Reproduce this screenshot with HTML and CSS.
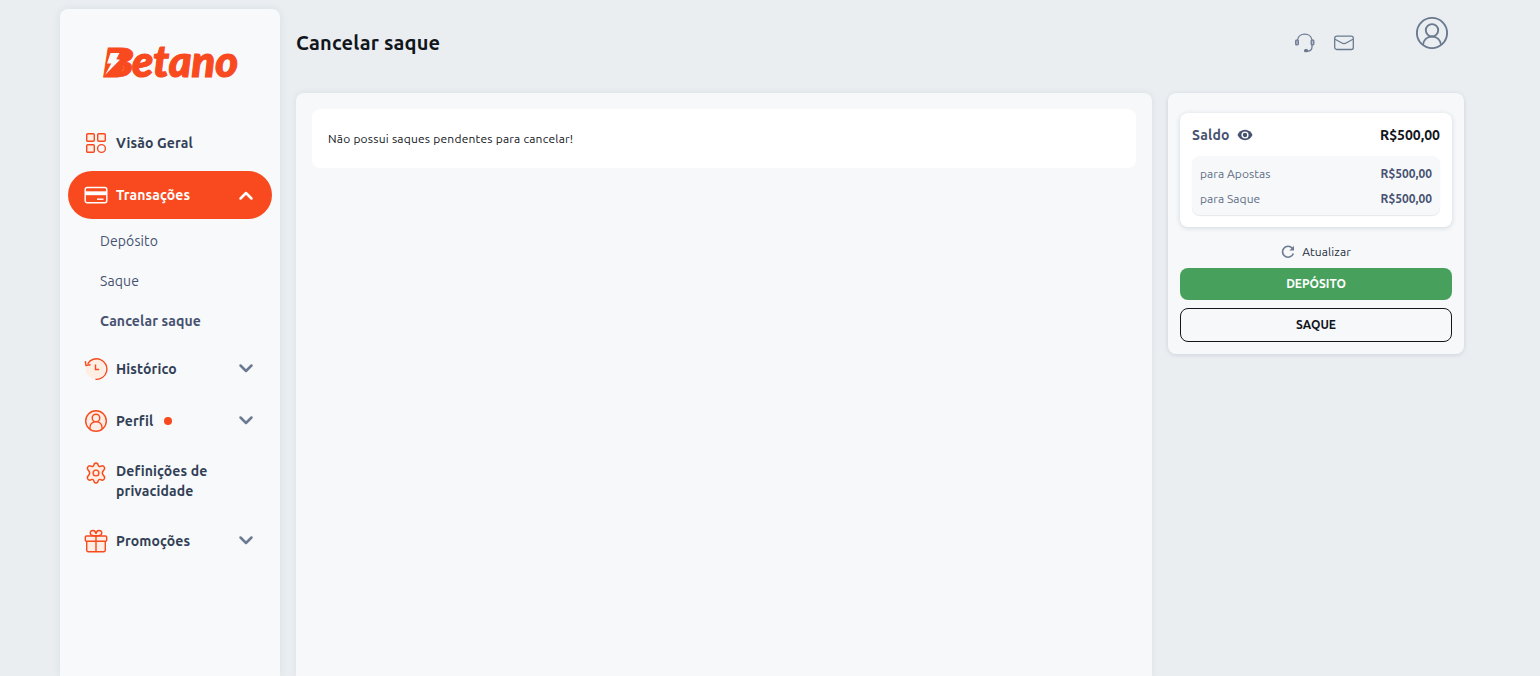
FILE: index.html
```html
<!DOCTYPE html>
<html lang="pt">
<head>
<meta charset="utf-8">
<title>Cancelar saque</title>
	<link rel="stylesheet" href="styles.css">
</head>
<body>
	<div class="page">
		<aside class="sidebar">
			<a class="logo" href="#">
				<svg width="180" height="90" viewBox="0 0 180 90">
					<text class="logo-b" x="22" y="57.500" textLength="32" lengthAdjust="spacingAndGlyphs">B</text>
					<text class="logo-text" x="52" y="57.500" textLength="106" lengthAdjust="spacingAndGlyphs">etano</text>
					<path d="M28 31h17l1 6-4 5 2 7-4 6H25z" fill="#f84a1e"/>
					<path d="M30.500 34h9l-3.200 6.200 3.700.6L25 56l6.300-11.500H27z" fill="#f7f9fb"/>
				</svg>
			</a>
			<nav class="menu">
				<a class="item" href="#">
					<svg class="icon" viewBox="0 0 24 24">
						<rect x="2.700" y="2.700" width="7.600" height="7.600" rx="1"/>
						<rect x="13.700" y="2.700" width="7.600" height="7.600" rx="1"/>
						<rect x="2.700" y="13.700" width="7.600" height="7.600" rx="1"/>
						<circle class="hollow" cx="17.500" cy="17.500" r="3.900"/>
					</svg>
					<span class="label">Visão Geral</span>
				</a>
				<a class="item active" href="#">
					<svg class="icon" viewBox="0 0 24 24">
						<rect x="1.200" y="4.500" width="21.600" height="15.300" rx="2"/>
						<path class="solid" d="M1 8.300h22v3.900H1z"/>
						<path d="M13 16.200h6.500"/>
					</svg>
					<span class="label">Transações</span>
					<svg class="chevron" viewBox="0 0 16 16"><path d="M2.500 11.500L8 6l5.500 5.500"/></svg>
				</a>
				<div class="submenu">
					<a href="#">Depósito</a>
					<a href="#">Saque</a>
					<a href="#" class="current">Cancelar saque</a>
				</div>
				<a class="item" href="#">
					<svg class="icon" viewBox="0 0 24 24">
						<circle class="tint" cx="11.500" cy="12" r="10"/>
						<path class="hollow" d="M3.700 6.800A10.300 10.300 0 1 1 11.500 22.300M1.300 4.200l.7 4.300 4.600-.8M11.500 7.500v5h3.700"/>
					</svg>
					<span class="label">Histórico</span>
					<svg class="chevron" viewBox="0 0 16 16"><path d="M2.500 4.500L8 10l5.500-5.500"/></svg>
				</a>
				<a class="item" href="#">
					<svg class="icon" viewBox="0 0 24 24">
						<circle cx="12" cy="12" r="10.300"/>
						<circle cx="12" cy="9" r="3.800"/>
						<path d="M6 20v-1.700c0-3.200 2.500-5.500 6-5.500s6 2.300 6 5.500V20"/>
					</svg>
					<span class="label">Perfil</span>
					<span class="dot"></span>
					<svg class="chevron" viewBox="0 0 16 16"><path d="M2.500 4.500L8 10l5.500-5.500"/></svg>
				</a>
				<a class="item wrap" href="#">
					<svg class="icon" viewBox="0 0 24 24">
						<path d="M9.900 4.200C10 2.700 10.800 2 12 2s2 .7 2.100 2.200c.2 1 1.500 1.600 2.500 1.100 1.500-.8 2.900-.5 3.700.8.700 1.300.3 2.500-.9 3.500-1.300 1.400-1.300 3.400 0 4.800 1.200 1 1.600 2.200.9 3.500-.8 1.300-2.200 1.600-3.700.8-1-.5-2.300.1-2.500 1.100C14 21.300 13.200 22 12 22s-2-.7-2.100-2.200c-.2-1-1.500-1.600-2.500-1.100-1.500.8-2.900.5-3.700-.8-.7-1.300-.3-2.500.9-3.500 1.300-1.400 1.300-3.400 0-4.800-1.200-1-1.600-2.200-.9-3.500.8-1.300 2.200-1.600 3.700-.8 1 .5 2.300-.1 2.500-1.100z"/>
						<circle class="hollow" cx="12" cy="12" r="2.900"/>
					</svg>
					<span class="label">Definições de<br>privacidade</span>
				</a>
				<a class="item" href="#">
					<svg class="icon" viewBox="0 0 24 24">
						<path d="M2.700 12v9.300c0 .8.500 1.400 1.300 1.400h16c.800 0 1.300-.600 1.300-1.400V12"/>
						<rect x="1.300" y="7" width="21.400" height="5.200" rx="1.200"/>
						<path d="M12 7v15.500M12 6.800C8 7 6 5.800 6.200 3.800 6.500 1 11.500 0 12 5c.5-5 5.500-4 5.800-1.200C18 5.800 16 7 12 6.800z"/>
					</svg>
					<span class="label">Promoções</span>
					<svg class="chevron" viewBox="0 0 16 16"><path d="M2.500 4.500L8 10l5.500-5.500"/></svg>
				</a>
			</nav>
		</aside>

		<div class="main">
			<header class="header">
				<h1>Cancelar saque</h1>
				<div class="tools">
					<svg class="support" width="20" height="20" viewBox="0 0 20 20">
						<path d="M2.500 7.500V7C3 3.500 6 1.100 9.700 1.100S16.500 3.500 17 7v7c0 2.500-1.500 4-4.500 4.300"/>
						<rect class="shade" x=".7" y="7.200" width="2.600" height="4.700" rx=".8"/>
						<rect class="shade" x="16.200" y="7.200" width="2.600" height="4.700" rx=".8"/>
						<rect class="full" x="9.600" y="16.700" width="3" height="2" rx="1"/>
					</svg>
					<svg class="mail" width="20" height="16" viewBox="0 0 20 16">
						<rect x=".7" y="1.200" width="18.600" height="13.300" rx="2"/>
						<path d="M1 4.300l6.500 3.500c1.500.9 3.500.9 5 0L19 4.300"/>
					</svg>
					<svg class="avatar" width="32" height="32" viewBox="0 0 32 32">
						<circle cx="16" cy="16" r="15.100"/>
						<circle cx="16" cy="13.300" r="6.200"/>
						<path d="M7 28c.500-5 4-8.500 9-8.500s8.500 3.500 9 8.500"/>
					</svg>
				</div>
			</header>

			<div class="columns">
				<section class="content">
					<p class="message">Não possui saques pendentes para cancelar!</p>
				</section>

				<aside class="wallet">
					<div class="balance">
						<div class="total">
							<span class="saldo">Saldo</span>
							<svg class="eye" width="16" height="12" viewBox="0 0 16 12">
								<path d="M8 .8C4.500.8 1.800 2.900.5 6c1.300 3.100 4 5.200 7.500 5.200s6.200-2.100 7.500-5.200C14.200 2.900 11.500.8 8 .8z" fill="#475270"/>
								<circle cx="8" cy="6" r="2.900" fill="#475270" stroke="#fff" stroke-width="1.400"/>
							</svg>
							<strong>R$500,00</strong>
						</div>
						<div class="details">
							<div class="row"><span>para Apostas</span><strong>R$500,00</strong></div>
							<div class="row"><span>para Saque</span><strong>R$500,00</strong></div>
						</div>
					</div>
					<a class="refresh" href="#">
						<svg width="14" height="14" viewBox="0 0 14 14">
							<path d="M11.300 3.200A5.500 5.500 0 1 0 12.300 8.500" fill="none" stroke="#6e7c93" stroke-width="1.600"/>
							<path d="M13 .8v4.700H8.300z" fill="#6e7c93"/>
						</svg>
						<span>Atualizar</span>
					</a>
					<button class="btn deposit">DEPÓSITO</button>
					<button class="btn withdraw">SAQUE</button>
				</aside>
			</div>
		</div>
	</div>
</body>
</html>
```

FILE: styles.css
```css
* {
	box-sizing: border-box;
}
body {
	margin: 0;
	height: 100vh;
	overflow: hidden;
	background: #eaeef1;
	font-family: Ubuntu, "Noto Sans", sans-serif;
	font-size: 14px;
	line-height: 20px;
	color: #323f55;
}
a {
	color: inherit;
	text-decoration: none;
}
.page {
	display: flex;
	gap: 16px;
	height: 100vh;
	padding: 9px 76px 0 60px;
}
.sidebar {
	width: 220px;
	flex: none;
	background: #f7f9fb;
	border-radius: 8px 8px 0 0;
	box-shadow: 0 0 8px rgba(30, 50, 80, 0.08);
}
.logo {
	display: flex;
	padding: 10px 0 0 20px;
	height: 110px;
}
.logo-b, .logo-text {
	font-family: Lato, sans-serif;
	font-style: italic;
	font-weight: 900;
	fill: #f84a1e;
	stroke: #f84a1e;
}
.logo-b {
	font-size: 39px;
	stroke-width: 0.8;
}
.logo-text {
	font-size: 43px;
	stroke-width: 1.2;
}
.menu {
	display: flex;
	flex-direction: column;
	gap: 4px;
	padding: 0 8px;
}
.item {
	display: flex;
	align-items: center;
	min-height: 48px;
	padding: 12px 16px;
	border-radius: 24px;
	font-weight: 700;
}
.item.wrap {
	align-items: flex-start;
}
.item.active {
	background: #f84a1e;
	color: #fff;
}
.label {
	margin-left: 8px;
	letter-spacing: 0.13px;
	white-space: nowrap;
}
.icon {
	width: 24px;
	height: 24px;
	flex: none;
	fill: #ffeee4;
	stroke: #f84a1e;
	stroke-width: 1.4;
}
.icon .hollow {
	fill: none;
}
.icon .tint {
	stroke: none;
}
.active .icon {
	fill: none;
	stroke: #fff;
}
.active .icon .solid {
	fill: #fff;
	stroke: none;
}
.chevron {
	width: 16px;
	height: 16px;
	margin-left: auto;
	margin-right: 2px;
	fill: none;
	stroke: #6c7a91;
	stroke-width: 2.5;
	stroke-linecap: round;
	stroke-linejoin: round;
}
.active .chevron {
	stroke: #fff;
}
.dot {
	width: 8px;
	height: 8px;
	margin-left: 11px;
	border-radius: 50%;
	background: #f84a1e;
}
.submenu {
	display: flex;
	flex-direction: column;
	margin-top: -2px;
	padding-left: 32px;
	color: #475270;
	letter-spacing: 0.1px;
}
.submenu a {
	line-height: 40px;
}
.submenu .current {
	font-weight: 700;
}

.main {
	flex: 1;
	min-width: 0;
	display: flex;
	flex-direction: column;
}
.header {
	display: flex;
	justify-content: space-between;
	height: 84px;
}
h1 {
	margin: 20px 0 0;
	font-size: 20px;
	line-height: 28px;
	letter-spacing: 0.15px;
	color: #12151b;
}
.tools {
	display: flex;
	align-items: flex-start;
	padding: 8px 16px 0 0;
	fill: none;
	stroke: #6c7a91;
	stroke-width: 1.3;
}
.tools .shade {
	fill: #b9c0cc;
}
.tools .full {
	fill: #6c7a91;
}
.support {
	margin-top: 16px;
}
.mail {
	margin: 18px 62px 0 19px;
}
.avatar {
	stroke-width: 1.9;
}
.columns {
	flex: 1;
	display: flex;
	align-items: flex-start;
	gap: 16px;
}
.content {
	flex: 1;
	align-self: stretch;
	padding: 16px;
	background: #f6f8fa;
	border-radius: 8px 8px 0 0;
	box-shadow: 0 0 6px rgba(30, 50, 80, 0.08);
}
.message {
	margin: 0;
	padding: 20px 16px 19px;
	background: #fff;
	border-radius: 8px;
	font-size: 12px;
	letter-spacing: 0.22px;
	color: #12151b;
}
.wallet {
	width: 296px;
	padding: 20px 12px 12px;
	background: #f6f8fa;
	border-radius: 8px;
	box-shadow: 0 1px 4px rgba(30, 50, 80, 0.14);
}
.balance {
	height: 114px;
	padding: 12px 12px 11px;
	background: #fff;
	border-radius: 8px;
	box-shadow: 0 1px 5px rgba(30, 50, 80, 0.16);
}
.total {
	display: flex;
	align-items: center;
	height: 20px;
	color: #475270;
}
.saldo {
	font-weight: 700;
	letter-spacing: 0.2px;
}
.eye {
	margin-left: 7px;
}
.total strong {
	margin-left: auto;
	color: #12151b;
}
.details {
	height: 59px;
	margin-top: 11px;
	padding: 5px 8px 4px;
	background: #f6f8fa;
	border-radius: 8px;
	box-shadow: 0 1px 1px rgba(30, 50, 80, 0.12);
}
.row {
	display: flex;
	justify-content: space-between;
	font-size: 12px;
	line-height: 25px;
	letter-spacing: 0.07px;
	color: #606d84;
}
.row strong {
	letter-spacing: 0;
	color: #475270;
}
.refresh {
	display: flex;
	align-items: center;
	justify-content: center;
	gap: 7px;
	height: 20px;
	margin: 15px 0 6px;
	font-size: 12px;
	letter-spacing: 0.1px;
	color: #252d3d;
}
.btn {
	display: block;
	width: 100%;
	height: 32px;
	padding: 0 0 1px;
	border: 0;
	border-radius: 8px;
	font-family: inherit;
	font-size: 12px;
	font-weight: 700;
}
.deposit {
	background: #47a15d;
	color: #fff;
}
.withdraw {
	height: 34px;
	margin-top: 8px;
	border: 1px solid #12151b;
	background: none;
	color: #12151b;
}
```
